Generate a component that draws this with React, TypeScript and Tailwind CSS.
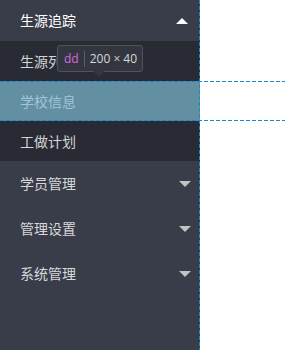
import React from "react";

const font = { fontFamily: '"Noto Sans CJK SC", "Noto Sans", sans-serif' };

function Caret({ up, color }: { up?: boolean; color: string }) {
  return (
    <svg width="12" height="6" viewBox="0 0 12 6" className="block">
      {up ? <polygon points="6,0 12,6 0,6" fill={color} /> : <polygon points="0,0 12,0 6,6" fill={color} />}
    </svg>
  );
}

export default function App() {
  return (
    <div className="relative w-[285px] h-[350px] bg-white overflow-hidden text-[14px]" style={font}>
      <div className="w-[200px] h-full bg-[#393d49] flex flex-col">
        <div className="h-[41px] flex items-center justify-between pl-5 pr-[12px] text-white">
          <span>生源追踪</span>
          <Caret up color="#ffffff" />
        </div>
        <div className="bg-[#282b33] flex flex-col">
          <div className="h-10 flex items-center pl-5 text-[#d3d4d6]">生源列表</div>
          <div className="h-10 flex items-center pl-5 bg-[#628fa2] text-[#a3c5d4]">学校信息</div>
          <div className="h-10 flex items-center pl-5 text-[#d3d4d6]">工做计划</div>
        </div>
        <div className="h-[45px] flex items-center justify-between pl-5 pr-[9px] text-[#d7d8da]">
          <span>学员管理</span>
          <Caret color="#c2c2c2" />
        </div>
        <div className="h-[45px] flex items-center justify-between pl-5 pr-[9px] text-[#d7d8da]">
          <span>管理设置</span>
          <Caret color="#c2c2c2" />
        </div>
        <div className="h-[45px] flex items-center justify-between pl-5 pr-[9px] text-[#d7d8da]">
          <span>系统管理</span>
          <Caret color="#c2c2c2" />
        </div>
      </div>

      {/* inspector guides */}
      <div className="absolute left-[199px] top-0 w-px h-full bg-[repeating-linear-gradient(to_bottom,#1c88c9_0px,#1c88c9_4px,transparent_4px,transparent_6px)]" />
      <div className="absolute left-0 top-[81px] w-full h-px bg-[repeating-linear-gradient(to_right,#1c88c9_0px,#1c88c9_4px,transparent_4px,transparent_6px)]" />
      <div className="absolute left-0 top-[120px] w-full h-px bg-[repeating-linear-gradient(to_right,#1c88c9_0px,#1c88c9_4px,transparent_4px,transparent_6px)]" />

      {/* tooltip */}
      <div className="absolute left-[57px] top-[45px]">
        <div className="relative h-[27px] w-[86px] rounded-[3px] bg-[#33363f] border border-[#50535b] flex items-center pl-[6px] whitespace-nowrap" style={{ fontFamily: '"Open Sans", "Noto Sans", sans-serif' }}>
          <span className="text-[#d56be5] text-[12px] leading-none">dd</span>
          <span className="mx-[5px] w-px h-[16px] bg-[#5c5f67]" />
          <span className="text-[#d5d7db] text-[12px] leading-none">200 × 40</span>
        </div>
        <div className="absolute left-[36px] top-[26px] w-0 h-0 border-l-[6px] border-r-[6px] border-t-[6px] border-l-transparent border-r-transparent border-t-[#33363f]" />
      </div>
    </div>
  );
}
